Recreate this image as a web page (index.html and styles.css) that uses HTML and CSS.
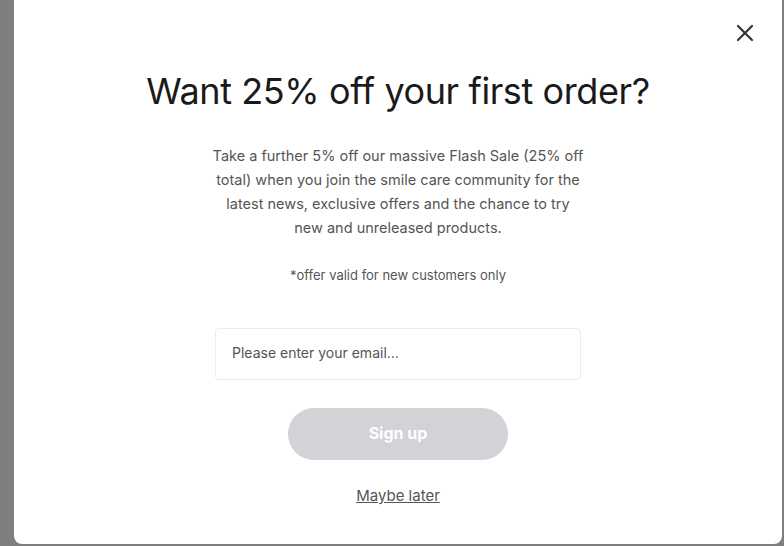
FILE: index.html
```html
<!DOCTYPE html>
<html>
<head>
<meta charset="utf-8">
<link rel="stylesheet" href="styles.css">
</head>
<body>
<div class="overlay">
  <div class="modal">
    <button class="close" aria-label="Close">
      <svg width="18" height="18" viewBox="0 0 18 18"><path d="M2 2L16 16M16 2L2 16" stroke="#333" stroke-width="2.2" stroke-linecap="round"/></svg>
    </button>
    <h1 class="title">Want 25% off your first order?</h1>
    <p class="lead">Take a further 5% off our massive Flash Sale (25% off total) when you join the smile care community for the latest news, exclusive offers and the chance to try new and unreleased products.</p>
    <p class="note">*offer valid for new customers only</p>
    <input class="email" type="email" placeholder="Please enter your email...">
    <button class="signup">Sign up</button>
    <a class="later" href="#">Maybe later</a>
  </div>
</div>
</body>
</html>
```
FILE: styles.css
```css
html, body {
  margin: 0;
  padding: 0;
  height: 100%;
}
body {
  background: #7f7f7f;
  font-family: Inter, "Noto Sans", sans-serif;
  overflow: hidden;
}
.overlay {
  display: flex;
  justify-content: flex-start;
  padding-left: 14px;
}
.modal {
  position: relative;
  margin-top: -8px;
  width: 768px;
  height: 552px;
  background: #fff;
  border-radius: 8px;
  display: flex;
  flex-direction: column;
  align-items: center;
  box-sizing: border-box;
  padding-top: 75px;
}
.close {
  position: absolute;
  top: 32px;
  right: 28px;
  background: none;
  border: 0;
  padding: 0;
  width: 18px;
  height: 18px;
}
.title {
  margin: 0;
  font-size: 36px;
  font-weight: 400;
  color: #1a1a1a;
  letter-spacing: -0.4px;
  line-height: 48px;
}
.lead {
  margin: 29px 0 0;
  width: 373px;
  text-align: center;
  font-size: 14.5px;
  line-height: 24px;
  color: #555;
}
.note {
  margin: 27px 0 0;
  font-size: 13px;
  color: #555;
}
.email {
  margin-top: 45px;
  width: 366px;
  height: 52px;
  box-sizing: border-box;
  border: 1px solid #ececec;
  border-radius: 4px;
  padding: 0 16px 4px;
  font-family: inherit;
  font-size: 14px;
  color: #333;
  outline: none;
}
.email::placeholder {
  color: #555;
}
.signup {
  margin-top: 28px;
  width: 220px;
  height: 52px;
  border: 0;
  border-radius: 26px;
  background: #d3d2d7;
  color: #fff;
  font-family: inherit;
  font-weight: 700;
  font-size: 16px;
  padding: 0 0 2px;
}
.later {
  margin-top: 26px;
  font-size: 15px;
  color: #555;
  text-decoration: underline;
}
```
